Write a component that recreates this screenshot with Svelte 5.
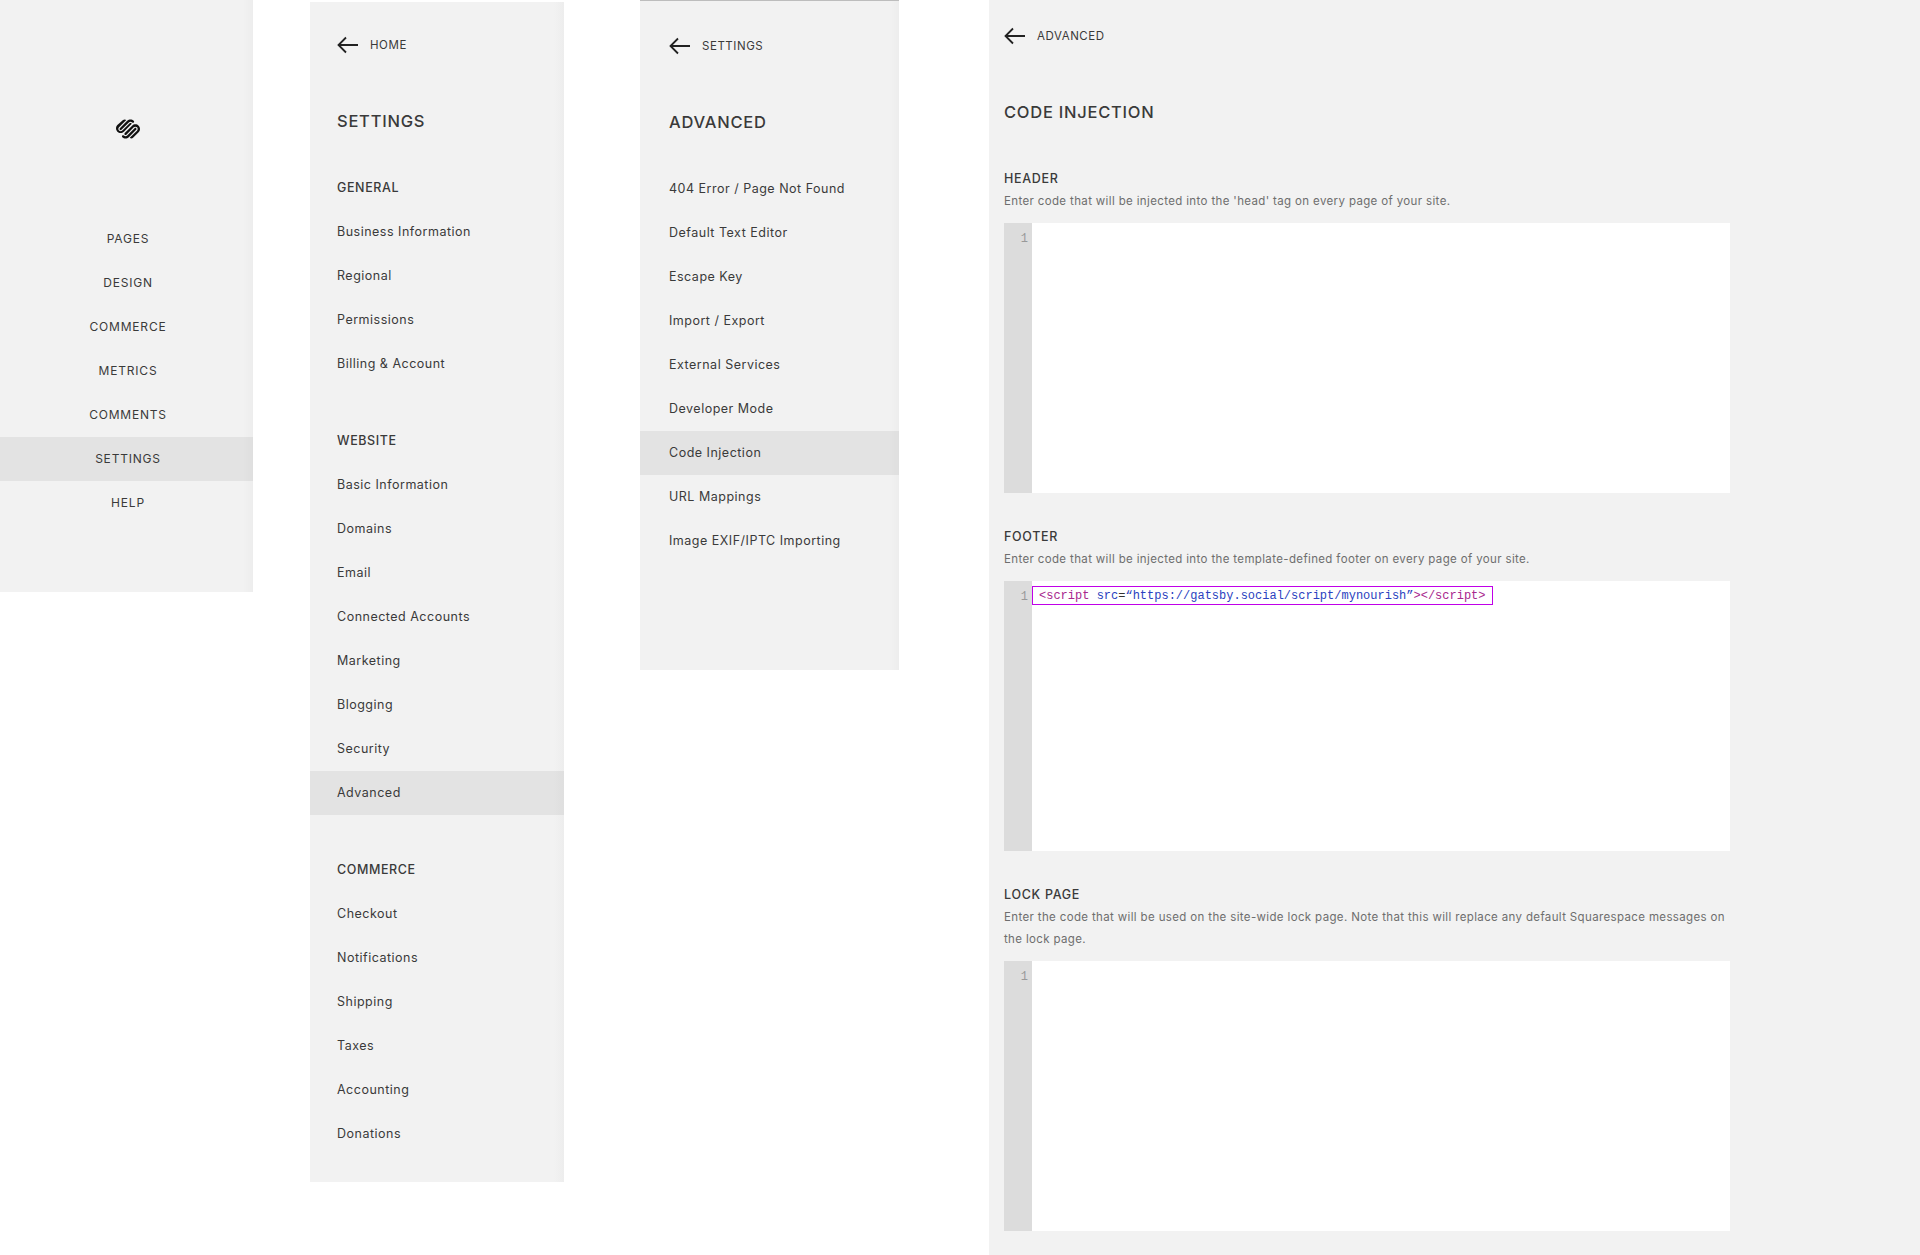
<script>
	const mainNav = ['PAGES', 'DESIGN', 'COMMERCE', 'METRICS', 'COMMENTS', 'SETTINGS', 'HELP'];

	const settings = [
		{ title: 'GENERAL', items: ['Business Information', 'Regional', 'Permissions', 'Billing & Account'] },
		{
			title: 'WEBSITE',
			items: ['Basic Information', 'Domains', 'Email', 'Connected Accounts', 'Marketing', 'Blogging', 'Security', 'Advanced']
		},
		{ title: 'COMMERCE', items: ['Checkout', 'Notifications', 'Shipping', 'Taxes', 'Accounting', 'Donations'] }
	];

	const advanced = [
		'404 Error / Page Not Found',
		'Default Text Editor',
		'Escape Key',
		'Import / Export',
		'External Services',
		'Developer Mode',
		'Code Injection',
		'URL Mappings',
		'Image EXIF/IPTC Importing'
	];
</script>

{#snippet back(label)}
	<div class="back">
		<svg width="21" height="18" viewBox="0 0 21 18" fill="none" stroke="#222" stroke-width="1.8">
			<path d="M21 9H1.5M9 1.5L1.5 9L9 16.500" />
		</svg>
		<span>{label}</span>
	</div>
{/snippet}

{#snippet editor(code)}
	<div class="editor">
		<div class="gutter">1</div>
		<div class="lines">
			{#if code}
				<div class="selected">
					<span class="tag">&lt;script</span> <span class="attr">src</span>=<span class="str">“https://gatsby.social/script/mynourish”</span><span class="tag">&gt;&lt;/script&gt;</span>
				</div>
			{/if}
		</div>
	</div>
{/snippet}

<div class="page">
	<nav class="panel edge main-nav">
		<svg class="logo" width="24" height="24" viewBox="0 0 24 24" fill="#111">
			<path d="M22.655 8.719c-1.802-1.801-4.726-1.801-6.564 0l-7.351 7.35c-.45.45-.45 1.2 0 1.65.45.449 1.2.449 1.65 0l7.351-7.351c.899-.899 2.362-.899 3.264 0 .9.9.9 2.364 0 3.264l-7.239 7.239c.9.899 2.362.899 3.263 0l5.589-5.589c1.836-1.838 1.836-4.763.037-6.563zm-2.475 2.437c-.451-.45-1.201-.45-1.65 0l-7.354 7.389c-.9.899-2.361.899-3.262 0-.45-.45-1.2-.45-1.65 0s-.45 1.2 0 1.649c1.801 1.801 4.726 1.801 6.564 0l7.351-7.35c.449-.487.449-1.239.001-1.688zm-2.439-7.35c-1.801-1.801-4.726-1.801-6.564 0l-7.351 7.351c-.45.449-.45 1.199 0 1.649s1.2.45 1.65 0l7.395-7.351c.9-.899 2.371-.899 3.264 0 .45.45 1.199.45 1.65 0 .45-.449.45-1.199-.044-1.649zm-2.43 2.438c-.45-.449-1.2-.449-1.65 0l-7.351 7.351c-.899.9-2.363.9-3.265 0-.9-.9-.9-2.364 0-3.264l7.239-7.239c-.9-.9-2.362-.9-3.263 0L1.35 8.081c-1.8 1.8-1.8 4.725 0 6.563 1.801 1.801 4.725 1.801 6.564 0l7.35-7.35c.451-.45.451-1.2 0-1.65z" />
		</svg>
		<ul>
			{#each mainNav as item}
				<li class:active={item === 'SETTINGS'}>{item}</li>
			{/each}
		</ul>
	</nav>

	<nav class="panel edge settings">
		{@render back('HOME')}
		<h1>SETTINGS</h1>
		{#each settings as group}
			<h2>{group.title}</h2>
			<ul class="group">
				{#each group.items as item}
					<li class:active={item === 'Advanced'}>{item}</li>
				{/each}
			</ul>
		{/each}
	</nav>

	<nav class="panel edge advanced">
		{@render back('SETTINGS')}
		<h1>ADVANCED</h1>
		<ul class="group">
			{#each advanced as item}
				<li class:active={item === 'Code Injection'}>{item}</li>
			{/each}
		</ul>
	</nav>

	<main class="panel content">
		{@render back('ADVANCED')}
		<h1>CODE INJECTION</h1>

		<section>
			<h3>HEADER</h3>
			<p>Enter code that will be injected into the 'head' tag on every page of your site.</p>
			{@render editor(false)}
		</section>

		<section>
			<h3>FOOTER</h3>
			<p>Enter code that will be injected into the template-defined footer on every page of your site.</p>
			{@render editor(true)}
		</section>

		<section>
			<h3>LOCK PAGE</h3>
			<p>Enter the code that will be used on the site-wide lock page. Note that this will replace any default Squarespace messages on the lock page.</p>
			{@render editor(false)}
		</section>
	</main>
</div>

<style>
	:global(body) {
		background: #fff;
	}

	.page {
		display: flex;
		align-items: flex-start;
		height: 1255px;
		overflow: hidden;
		font-family: Inter, 'Liberation Sans', sans-serif;
		color: #3a3a3a;
	}

	ul {
		list-style: none;
		margin: 0;
		padding: 0;
	}

	.panel {
		background-color: #f2f2f2;
		box-sizing: border-box;
	}

	.edge {
		background-image: linear-gradient(to right, transparent calc(100% - 10px), #ededed);
	}

	.main-nav {
		width: 253px;
		height: 592px;
		padding-top: 117px;
		text-align: center;
		font-size: 12px;
		letter-spacing: 0.8px;

		.logo {
			display: block;
			margin: 0 0 76px 116px;
		}

		li {
			height: 44px;
			line-height: 44px;
			padding-left: 3px;
		}
	}

	.active {
		background: rgba(0, 0, 0, 0.06);
	}

	.settings {
		width: 254px;
		height: 1180px;
		margin: 2px 0 0 57px;
		padding-top: 32px;
	}

	.advanced {
		width: 259px;
		height: 670px;
		margin-left: 76px;
		padding-top: 34px;
		border-top: 1px solid #bdbdbd;
	}

	.content {
		flex: 1;
		height: 1255px;
		margin-left: 90px;
		padding: 25px 0 0 15px;
	}

	.back {
		display: flex;
		align-items: center;
		gap: 12px;
		height: 22px;
		font-size: 11.500px;
		letter-spacing: 0.55px;

		svg {
			display: block;
		}
	}

	.settings .back,
	.advanced .back {
		padding-left: 27px;
		margin-bottom: 53px;
	}

	.advanced .back {
		padding-left: 29px;
	}

	h1 {
		margin: 0;
		padding-left: 27px;
		font-size: 16.500px;
		line-height: 24px;
		font-weight: 500;
		letter-spacing: 0.75px;
	}

	.advanced h1 {
		padding-left: 29px;
	}

	.content h1 {
		padding-left: 0;
		margin-top: 53px;
		margin-bottom: 44px;
	}

	h2 {
		margin: 33px 0 0;
		padding-left: 27px;
		height: 44px;
		font-size: 12.500px;
		line-height: 44px;
		font-weight: 500;
		letter-spacing: 0.6px;
	}

	.group li {
		height: 44px;
		line-height: 44px;
		padding-left: 27px;
		font-size: 12.500px;
		letter-spacing: 0.5px;
	}

	.advanced .group {
		margin-top: 33px;

		li {
			padding-left: 29px;
		}
	}

	section {
		width: 726px;
		margin-bottom: 33px;

		h3 {
			margin: 0;
			font-size: 12.500px;
			line-height: 22px;
			font-weight: 500;
			letter-spacing: 0.7px;
		}

		p {
			margin: 0 0 11px;
			font-size: 11.500px;
			line-height: 22px;
			color: #6e6e6e;
			letter-spacing: 0.36px;
		}
	}

	.editor {
		display: flex;
		height: 270px;
		background: #fff;
	}

	.gutter {
		width: 28px;
		flex: none;
		box-sizing: border-box;
		background: #dcdcdc;
		padding: 9px 4px 0 0;
		text-align: right;
		font: 12px/14px 'Liberation Mono', monospace;
		color: #999;
	}

	.lines {
		flex: 1;
		padding-top: 5px;
	}

	.selected {
		box-sizing: border-box;
		width: 461px;
		height: 19px;
		border: 1px solid #c000e8;
		padding: 1px 0 0 6px;
		font: 12px/16px 'Liberation Mono', monospace;
		color: #333;
		white-space: pre;
	}

	.tag {
		color: #a8278e;
	}

	.attr,
	.str {
		color: #2a3fc0;
	}
</style>
